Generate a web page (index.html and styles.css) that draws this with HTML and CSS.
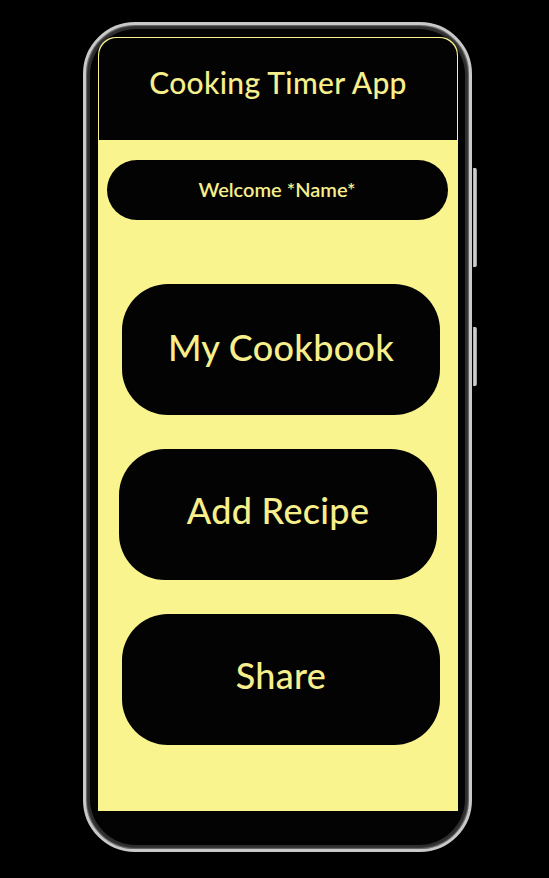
FILE: index.html
```html
<!DOCTYPE html>
<html lang="en">
<head>
    <meta charset="UTF-8">
    <meta name="viewport" content="width=device-width, initial-scale=1.0">
    <title>Cooking Timer App</title>
    <link rel="stylesheet" href="styles.css">
</head>
<body>

<div class="phone">
    <span class="side-btn power"></span>
    <span class="side-btn volume"></span>
    <div class="bezel">
        <div class="screen">
            <div class="header">
                <h1>Cooking Timer App</h1>
            </div>
            <div class="content">
                <div class="welcome">Welcome *Name*</div>
                <button class="menu-btn">My Cookbook</button>
                <button class="menu-btn shift-left">Add Recipe</button>
                <button class="menu-btn">Share</button>
            </div>
        </div>
    </div>
</div>

</body>
</html>
```

FILE: styles.css
```css
body {
    margin: 0;
    background: #000;
    font-family: Lato, "Open Sans", sans-serif;
}
.phone {
    position: relative;
    width: 389px;
    height: 830px;
    margin: 22px 0 0 83px;
    border: 3px solid #c9c9c9;
    border-radius: 52px;
    background: #2e2e2e;
    padding: 4px;
    box-sizing: border-box;
    box-shadow: inset 0 0 2px #fff;
}
.bezel {
    height: 100%;
    background: #030303;
    border-radius: 46px;
    padding: 8px 7px 34px 8px;
    box-sizing: border-box;
}
.screen {
    height: 774px;
    background: #faf48f;
    border-radius: 18px 18px 0 0;
    display: flex;
    flex-direction: column;
}
.header {
    height: 102px;
    margin: 1px 1px 0;
    background: #030303;
    border-radius: 18px 18px 0 0;
    display: flex;
    align-items: center;
    justify-content: center;
}
.header h1 {
    margin: 0 0 14px;
    color: #f6ef8b;
    font-size: 30px;
    font-weight: 500;
    letter-spacing: 0.3px;
}
.content {
    display: flex;
    flex-direction: column;
    align-items: center;
    padding-top: 20px;
}
.welcome {
    width: 341px;
    height: 60px;
    margin-left: -2px;
    padding-bottom: 2px;
    box-sizing: border-box;
    border-radius: 30px;
    background: #030303;
    color: #f6ef8b;
    font-size: 20px;
    font-weight: 600;
    display: flex;
    align-items: center;
    justify-content: center;
}
.menu-btn {
    width: 318px;
    height: 131px;
    margin: 64px 0 0 6px;
    padding: 0 0 6px;
    border: none;
    border-radius: 46px;
    background: #030303;
    color: #f6ef8b;
    font-family: inherit;
    font-size: 36px;
    font-weight: 500;
    letter-spacing: 0.3px;
}
.menu-btn + .menu-btn {
    margin-top: 34px;
    padding-bottom: 10px;
}
.menu-btn.shift-left {
    margin-left: 0;
}
.side-btn {
    position: absolute;
    right: -8px;
    width: 4px;
    background: linear-gradient(to right, #9a9a9a, #e0e0e0, #8a8a8a);
    border-radius: 0 2px 2px 0;
}
.side-btn.power {
    top: 143px;
    height: 99px;
}
.side-btn.volume {
    top: 302px;
    height: 59px;
}
```
